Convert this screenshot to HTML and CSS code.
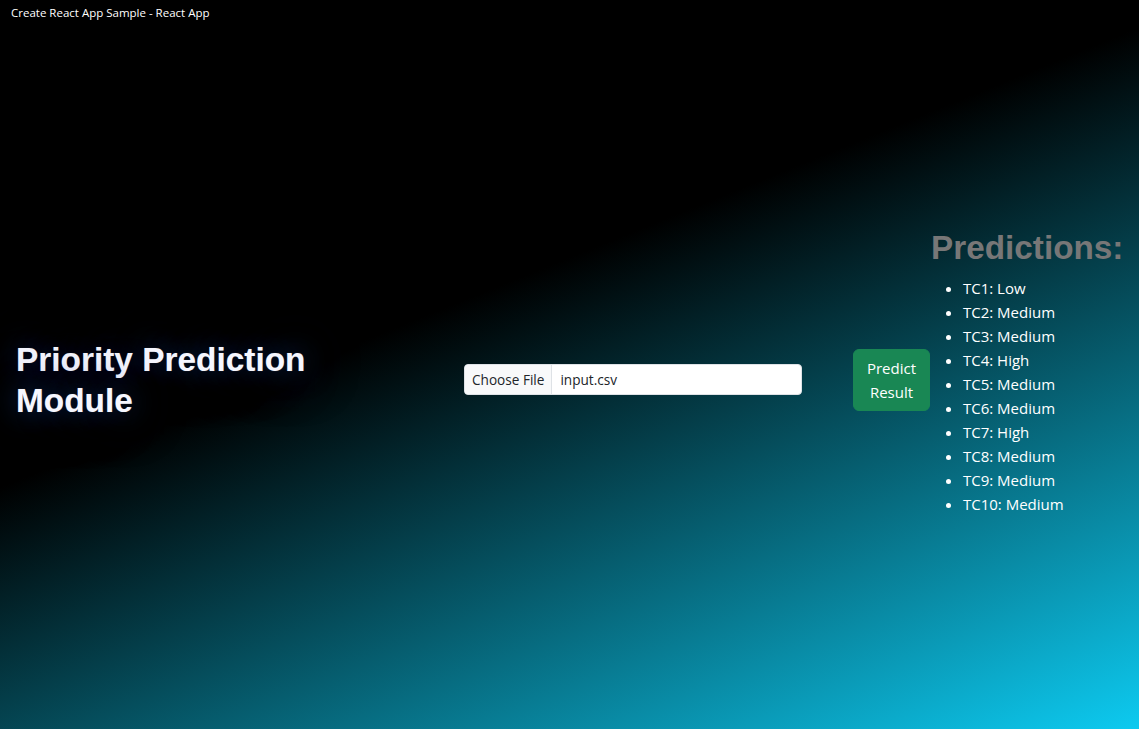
FILE: index.html
```html
<!DOCTYPE html>
<html lang="en">
<head>
<meta charset="utf-8">
<title>Create React App Sample - React App</title>
<link rel="stylesheet" href="styles.css">
</head>
<body>
<div class="titlebar">Create React App Sample - React App</div>
<main class="app">
  <div class="col-heading">
    <h1 class="title">Priority Prediction Module</h1>
  </div>
  <div class="col-upload">
    <div class="file-input">
      <span class="file-btn">Choose File</span>
      <span class="file-name">input.csv</span>
    </div>
  </div>
  <div class="col-button">
    <button class="btn-predict" type="button">Predict Result</button>
  </div>
  <div class="col-results">
    <h2 class="results-title">Predictions:</h2>
    <ul class="results-list">
      <li>TC1: Low</li>
      <li>TC2: Medium</li>
      <li>TC3: Medium</li>
      <li>TC4: High</li>
      <li>TC5: Medium</li>
      <li>TC6: Medium</li>
      <li>TC7: High</li>
      <li>TC8: Medium</li>
      <li>TC9: Medium</li>
      <li>TC10: Medium</li>
    </ul>
  </div>
</main>
</body>
</html>
```

FILE: styles.css
```css
* { box-sizing: border-box; }

html, body {
  margin: 0;
  height: 100%;
}

body {
  font-family: "Open Sans", "Noto Sans", sans-serif;
  font-size: 15px;
  line-height: 24px;
  color: #fff;
  background: linear-gradient(158deg, #000 41%, #0dcaf0 100%);
  display: flex;
  flex-direction: column;
  overflow: hidden;
}

.titlebar {
  height: 30px;
  padding: 4px 11px;
  font-size: 11.5px;
  line-height: 18px;
  color: #fff;
  flex: 0 0 auto;
}

.app {
  flex: 1 1 auto;
  display: grid;
  grid-template-columns: 448px 405px 78px 1fr;
  align-items: center;
}

.col-heading {
  padding: 0 16px;
}

.title {
  margin: 0;
  font-family: "Liberation Sans", Arial, sans-serif;
  font-weight: 700;
  font-size: 33.4px;
  line-height: 41px;
  color: #f6f7ff;
  width: 300px;
  text-shadow: 0 0 1px rgba(255,255,255,0.3), 0 0 28px rgba(25, 80, 170, 0.6), 0 0 56px rgba(20, 60, 140, 0.5);
}

.col-upload {
  padding-left: 16px;
}

.file-input {
  display: flex;
  width: 338px;
  height: 31px;
  background: #fff;
  border: 1px solid #dee2e6;
  border-radius: 4px;
  overflow: hidden;
  font-size: 13.6px;
  line-height: 29px;
  color: #212529;
}

.file-btn {
  background: #f8f9fa;
  padding: 0 7px;
  border-right: 1px solid #dee2e6;
}

.file-name {
  padding: 0 8px;
}

.btn-predict {
  display: block;
  width: 77px;
  padding: 6px 10px;
  font-family: inherit;
  font-size: 15px;
  line-height: 24px;
  color: #fff;
  background: #198754;
  border: 1px solid #198754;
  border-radius: 6px;
  text-align: center;
}

.col-results {
  padding-right: 16px;
}

.results-title {
  margin: 0 0 8px;
  font-family: "Liberation Sans", Arial, sans-serif;
  font-weight: 700;
  font-size: 33.3px;
  line-height: 40px;
  color: #777;
  white-space: nowrap;
}

.results-list {
  margin: 0 0 16px;
  padding-left: 32px;
}
```
